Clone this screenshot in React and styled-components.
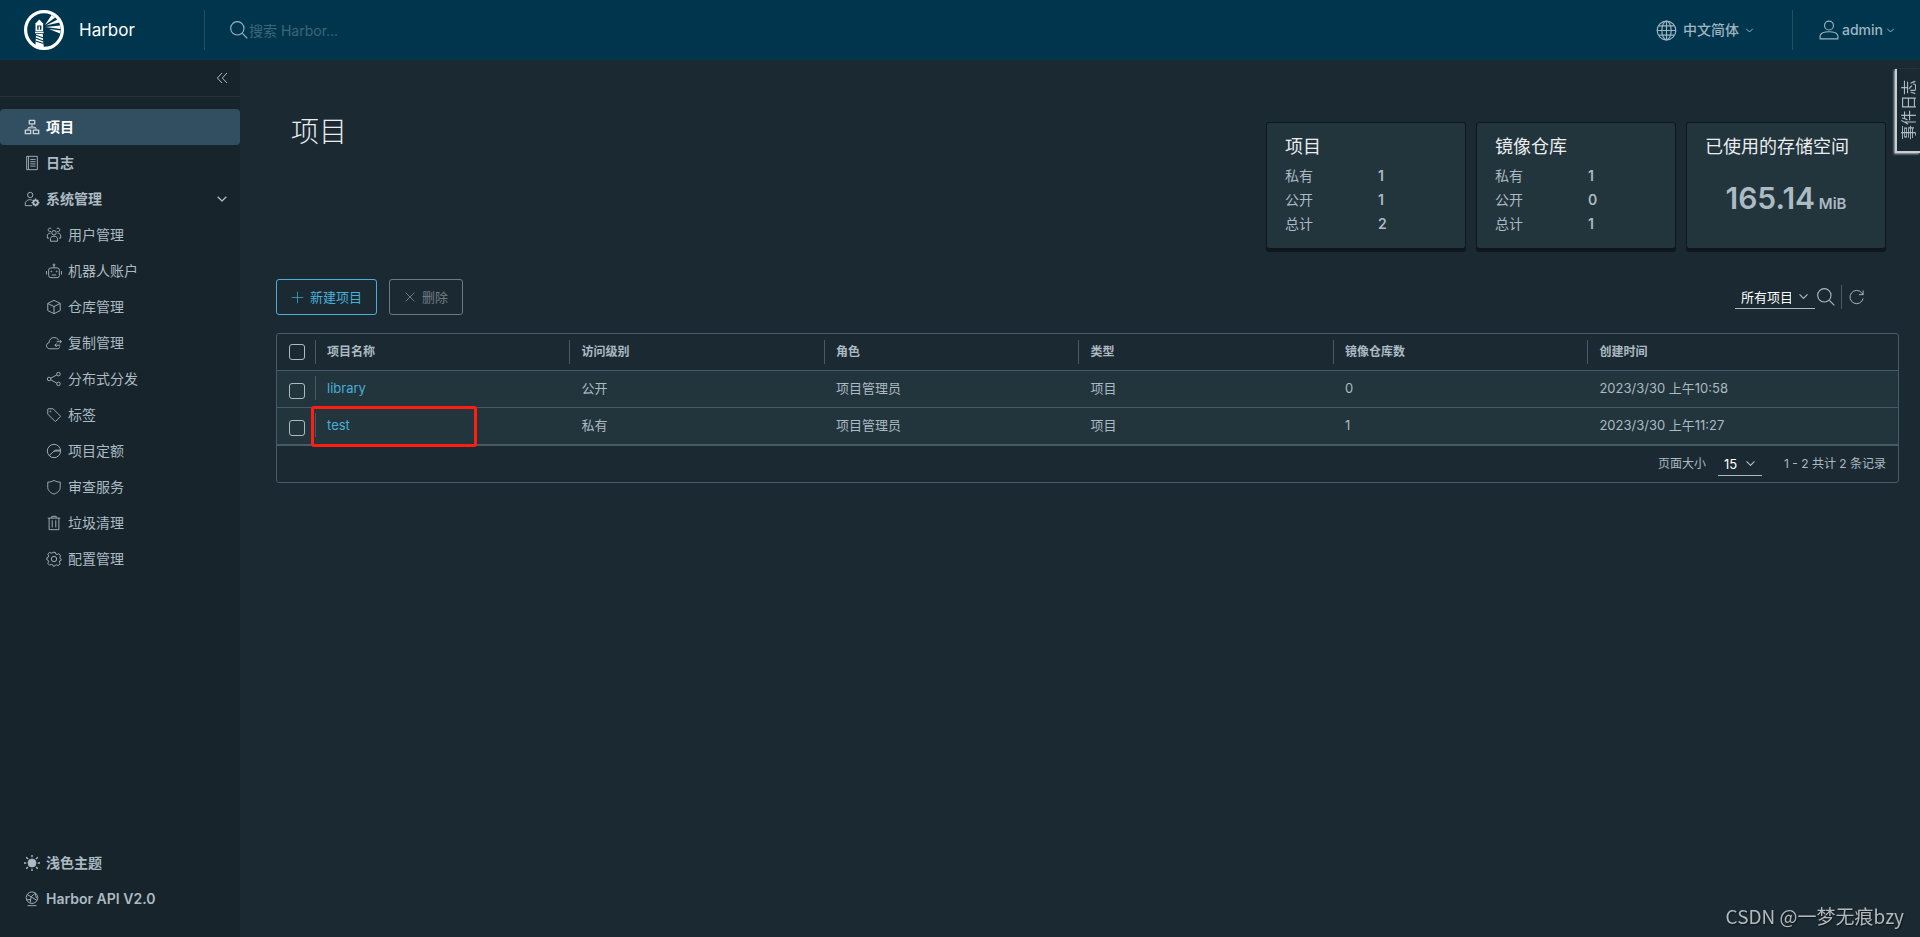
import React from "react";
import styled, { createGlobalStyle, css, ThemeProvider } from "styled-components";

const theme = {
	page: "#1b2a32",
	sidebar: "#17242b",
	header: "#00364d",
	row: "#22343c",
	line: "#495a67",
	text: "#acbac3",
	bright: "#eaedf0",
	link: "#49afd9",
	active: "#324f62",
	dark: "#0f171c"
};

const GlobalStyle = createGlobalStyle`
	* {
		box-sizing: border-box;
	}
	body {
		margin: 0;
		background: #1b2a32;
		color: #acbac3;
		font-family: Inter, "Noto Sans CJK SC", sans-serif;
		font-size: 13px;
		line-height: 24px;
	}
	button, input, select {
		font: inherit;
		color: inherit;
		margin: 0;
	}
	button {
		background: none;
		border: 0;
		padding: 0;
		cursor: pointer;
	}
	a {
		color: inherit;
		text-decoration: none;
	}
`;

/* ---------- icons ---------- */

const Svg = styled.svg`
	width: ${props => props.$size || 16}px;
	height: ${props => props.$size || 16}px;
	flex: none;
	fill: none;
	stroke: currentColor;
	stroke-width: ${props => props.$stroke || 2};
	stroke-linejoin: round;
	pointer-events: none;
`;

const shapes = {
	organization: (
		<>
			<path d="M12 3h12v8H12zM3 25h12v8H3zM21 25h12v8H21z" strokeWidth="3" />
			<path d="M18 11v6M9 25v-5h18v5M9 20l9-3 9 3" />
		</>
	),
	list: (
		<>
			<path d="M6 3h24v30H6z" />
			<path d="M10 3v30M14 10h12M14 15h12M14 20h12M14 25h12" />
		</>
	),
	admin: (
		<>
			<circle cx="14" cy="9" r="6" />
			<path d="M18 33H3v-7c3-6 10-8 16-5" />
			<circle cx="26" cy="26" r="5" strokeWidth="4" />
			<path d="M26 17v4M26 31v4M17 26h4M31 26h4M20 20l3 3M29 29l3 3M32 20l-3 3M20 32l3-3" strokeWidth="3" />
		</>
	),
	users: (
		<>
			<circle cx="18" cy="13" r="5" />
			<path d="M10 32v-6c1-4 4-5 8-5s7 1 8 5v6z" />
			<path d="M11 10a4 4 0 1 1 1-6M25 10a4 4 0 1 0-1-6M10 14c-4 0-6 2-7 4v7h4M26 14c4 0 6 2 7 4v7h-4" />
		</>
	),
	robot: (
		<>
			<rect x="6" y="11" width="24" height="22" rx="5" />
			<circle cx="18" cy="4" r="2" />
			<path d="M18 6v5M13 27h10M1 18v8M35 18v8" />
			<circle cx="12" cy="19" r="1" />
			<circle cx="24" cy="19" r="1" />
		</>
	),
	box: <path d="M18 3l14 7v16l-14 7-14-7V10zM4 10l14 7 14-7M18 17v16" />,
	cloud: (
		<>
			<path d="M31 26c-1 4-3 5-6 5H8c-9-1-9-12-1-14 0-13 18-15 21-5" />
			<path d="M20 23h12M24 19l-4 4 4 4M24 15h10M31 11l4 4-4 4" />
		</>
	),
	share: (
		<>
			<circle cx="7" cy="18" r="4" />
			<circle cx="28" cy="7" r="4" />
			<circle cx="28" cy="29" r="4" />
			<path d="M11 16l13-7M11 20l13 7" />
		</>
	),
	tag: (
		<>
			<path d="M4 5v11l16 16q1 1 2 0l10-10q1-1 0-2L16 4H5z" />
			<circle cx="10" cy="10" r="1" />
		</>
	),
	quota: (
		<>
			<circle cx="18" cy="18" r="15" />
			<path d="M7 29l11-11h14M18 18l4-2h10" />
		</>
	),
	shield: <path d="M18 3c4 3 9 4 14 4v12c0 7-6 12-14 15C10 31 4 26 4 19V7c5 0 10-1 14-4z" />,
	trash: <path d="M4 7h28M13 7V3h10v4M7 7v26h22V7M14 12v16M22 12v16" />,
	cog: (
		<>
			<circle cx="18" cy="18" r="6" />
			<path d="M15 3h6l1 4 3 1 4-2 4 5-2 3 1 3 2 1v3l-3 1-1 3 2 4-5 4-3-2-3 1-1 2h-4l-1-3-3-1-4 2-4-4 2-4-1-3-3-1v-5l3-1 1-3-2-4 4-4 4 2 3-1z" />
		</>
	),
	sun: (
		<>
			<circle cx="18" cy="18" r="9" fill="currentColor" />
			<path d="M18 0v5M18 31v5M0 18h5M31 18h5M5 5l4 4M27 27l4 4M31 5l-4 4M9 27l-4 4" strokeWidth="3" />
		</>
	),
	api: (
		<>
			<circle cx="18" cy="15" r="13" />
			<path d="M7 8l9 5 9-8M16 13l-2 13M16 13l13 8M25 5l3 11M6 20l9-1M8 33h20" />
		</>
	),
	search: (
		<>
			<circle cx="15" cy="15" r="12" />
			<path d="M24 24l9 9" />
		</>
	),
	globe: (
		<>
			<circle cx="18" cy="18" r="16" />
			<ellipse cx="18" cy="18" rx="8" ry="16" />
			<path d="M18 2v32M2 18h32M5 10h26M5 26h26" />
		</>
	),
	user: (
		<>
			<circle cx="18" cy="10" r="8" />
			<path d="M2 34v-6c3-9 29-9 32 0v6z" />
		</>
	),
	chevron: <path d="M5 11l13 13 13-13" />,
	collapse: <path d="M18 3L4 18l14 15M33 3L19 18l14 15" />,
	plus: <path d="M18 2v32M2 18h32" />,
	times: <path d="M5 5l26 26M31 5L5 31" />,
	refresh: <path d="M32 20a14 14 0 1 1-3-12l3 4M32 3v9h-9" />
};

const Icon = ({ name, size, stroke }) => (
	<Svg viewBox="0 0 36 36" $size={size} $stroke={stroke} aria-hidden="true">
		{shapes[name]}
	</Svg>
);

const LogoSvg = styled.svg`
	width: 40px;
	height: 40px;
	fill: #fff;
`;

const Logo = () => (
	<LogoSvg viewBox="0 0 40 40" aria-hidden="true">
		<circle cx="20" cy="20" r="18.4" fill="none" stroke="#fff" strokeWidth="3.2" />
		<path d="M15.3 9.5l4.2 4.5h-8.4z" />
		<path fillRule="evenodd" d="M11.5 13.5h7.6v7.8h-7.6zM13.2 15.4v4.4h4.2v-4.4z" />
		<path d="M14.6 16.6h1.4v3.2h-1.4zM11 21.8h8.6v1.5H11z" />
		<path d="M12 24h6.8l.4 8 .8 7-8.6-1.4z" />
		<path d="M11.5 25l8 3M11.5 28l8 3M11.5 31l8 2.6" stroke="#00364d" strokeWidth="1.1" />
		<path d="M21 15l6.6-10 3.6 2.4zM22 15.6l12-6.4 1.4 3.2zM21.5 17l15-1.6v3.6zM25 19l11.6 1.6-.5 3z" />
	</LogoSvg>
);

/* ---------- header ---------- */

const Header = styled.header`
	display: flex;
	align-items: center;
	height: 60px;
	background: ${props => props.theme.header};
`;

const Brand = styled.a`
	display: flex;
	align-items: center;
	gap: 15px;
	width: 204px;
	padding-left: 24px;
	font-size: 17px;
	color: #fff;
`;

const Divider = styled.span`
	width: 1px;
	height: ${props => props.$height}px;
	background: ${props => props.$color};
`;

const SearchBox = styled.label`
	display: flex;
	align-items: center;
	flex: 1;
	padding-left: 24px;
	color: #9fb5c0;
	input {
		flex: 1;
		background: none;
		border: 0;
		outline: 0;
		padding: 2px 0 0;
		font-size: 14px;
	}
	input::placeholder {
		color: #3f6577;
	}
`;

const HeaderButton = styled.button`
	display: flex;
	align-items: center;
	gap: ${props => props.$gap}px;
	padding: ${props => props.$pad};
	font-size: 14px;
	font-weight: 500;
	color: #9fb5c0;
`;

/* ---------- sidebar ---------- */

const Layout = styled.div`
	display: flex;
	min-height: calc(100vh - 60px);
`;

const Sidebar = styled.nav`
	display: flex;
	flex-direction: column;
	width: 240px;
	flex: none;
	padding-bottom: 20px;
	background: ${props => props.theme.sidebar};
`;

const Collapse = styled.button`
	display: flex;
	align-items: center;
	justify-content: flex-end;
	height: 37px;
	padding-right: 12px;
	margin-bottom: 12px;
	border-bottom: 1px solid #25343c;
`;

const NavItem = styled.a`
	display: flex;
	align-items: center;
	gap: 6px;
	height: 36px;
	padding: 0 12px 0 24px;
	font-size: 14px;
	font-weight: 600;
	${props =>
		props.$sub &&
		css`
			padding-left: 46px;
			font-weight: 400;
		`}
	${props =>
		props.$active &&
		css`
			background: ${props.theme.active};
			border-radius: 4px;
			color: #fff;
			svg {
				color: #c8d3da;
			}
		`}
	span {
		flex: 1;
		text-align: left;
	}
`;

const NavBottom = styled.div`
	margin-top: auto;
`;

/* ---------- content ---------- */

const Main = styled.main`
	flex: 1;
	min-width: 0;
	padding: 53px 21px 24px 36px;
`;

const TitleBar = styled.div`
	display: flex;
	justify-content: space-between;
	padding: 0 13px 0 15px;
	margin-bottom: 30px;
`;

const Title = styled.h1`
	margin: 0;
	font-size: 28px;
	font-weight: 300;
	line-height: 38px;
	color: ${props => props.theme.bright};
`;

const Cards = styled.div`
	display: flex;
	gap: 10px;
	padding-top: 9px;
`;

const Card = styled.section`
	width: 200px;
	padding: 12px 18px;
	background: ${props => props.theme.row};
	border: 1px solid ${props => props.theme.dark};
	border-radius: 3px;
	box-shadow: 0 3px 0 ${props => props.theme.dark};
	font-size: 14px;
	h2 {
		margin: 0 0 5px;
		font-size: 18px;
		font-weight: 400;
		line-height: 24px;
		color: ${props => props.theme.bright};
	}
	dl {
		display: grid;
		grid-template-columns: 93px 1fr;
		margin: 0;
	}
	dd {
		margin: 0;
		font-weight: 600;
	}
`;

const Storage = styled.p`
	margin: 0;
	padding-top: 16px;
	text-align: center;
	font-size: 15px;
	font-weight: 600;
	line-height: 36px;
	strong {
		font-size: 30px;
		font-weight: 600;
	}
`;

const Toolbar = styled.div`
	display: flex;
	align-items: center;
	gap: 12px;
	margin-bottom: 18px;
`;

const ActionButton = styled.button`
	display: flex;
	align-items: center;
	gap: 6px;
	height: 36px;
	padding: 0 14px;
	border: 1px solid ${props => props.theme.link};
	border-radius: 3px;
	color: ${props => props.theme.link};
	font-weight: 400;
	&:disabled {
		border-color: #6f7b82;
		color: #6f7b82;
		cursor: default;
	}
`;

const Filters = styled.div`
	display: flex;
	align-items: center;
	margin-left: auto;
	padding-right: 34px;
`;

const IconButton = styled.button`
	display: flex;
	padding: ${props => props.$pad || "0"};
`;

// native select with its own caret on top of the right edge
const SelectBox = styled.span`
	display: flex;
	align-items: center;
	width: ${props => props.$width}px;
	border-bottom: 1px solid ${props => props.theme.text};
	color: ${props => props.theme.text};
	select {
		flex: 1;
		width: 100%;
		height: 23px;
		padding: 0 24px 2px 6px;
		margin-right: -17px;
		appearance: none;
		background: none;
		border: 0;
		outline: 0;
		color: #fff;
	}
	svg {
		margin-right: 6px;
	}
`;

const Select = ({ width, label, value }) => (
	<SelectBox $width={width}>
		<select aria-label={label} defaultValue={value}>
			<option>{value}</option>
		</select>
		<Icon name="chevron" size={11} stroke={4} />
	</SelectBox>
);

const Datagrid = styled.div`
	border: 1px solid ${props => props.theme.line};
	border-radius: 3px;
`;

const Table = styled.table`
	width: 100%;
	table-layout: fixed;
	border-collapse: separate;
	border-spacing: 0;
	th,
	td {
		height: 37px;
		padding: 0;
		border-bottom: 1px solid ${props => props.theme.line};
		text-align: left;
	}
	th {
		width: 15.7%;
		font-size: 12px;
		font-weight: 600;
	}
	th:first-child {
		width: 38px;
	}
	th:last-child {
		width: auto;
	}
	tbody {
		background: ${props => props.theme.row};
	}
	td {
		position: relative;
		padding-bottom: 2px;
	}
	a {
		color: ${props => props.theme.link};
	}
`;

const Cell = styled.div`
	padding-left: 11px;
	border-left: 1px solid ${props => (props.$line ? props.theme.line : "transparent")};
`;

const Checkbox = styled.input.attrs({ type: "checkbox" })`
	display: block;
	appearance: none;
	width: 16px;
	height: 16px;
	margin-left: 12px;
	border: 1px solid ${props => props.theme.text};
	border-radius: 3px;
	td & {
		margin-top: 5px;
	}
`;

const Highlight = styled.span`
	position: absolute;
	top: -2px;
	left: -4px;
	width: 166px;
	height: 41px;
	border: 3px solid #ff1e10;
	border-radius: 3px;
	pointer-events: none;
`;

const Footer = styled.div`
	display: flex;
	align-items: center;
	justify-content: flex-end;
	height: 37px;
	padding-right: 12px;
	border-top: 1px solid ${props => props.theme.line};
	font-size: 12px;
	label {
		display: flex;
		align-items: center;
		gap: 12px;
		margin-right: 22px;
	}
	select {
		font-size: 13px;
		padding-bottom: 0;
	}
`;

/* ---------- overlays ---------- */

const EventTab = styled.button`
	position: fixed;
	top: 69px;
	right: 0;
	width: 25px;
	height: 84px;
	background: ${props => props.theme.page};
	border: solid #c8cdd1;
	border-width: 0 0 2px 2px;
	box-shadow: -1px 1px 2px #acbac3;
	font-size: 15px;
	span {
		display: block;
		writing-mode: vertical-rl;
		text-orientation: sideways;
		transform: rotate(180deg);
		line-height: 24px;
		text-align: center;
	}
`;

const Watermark = styled.div`
	position: fixed;
	right: 16px;
	bottom: 9px;
	font-family: "Noto Sans CJK SC", sans-serif;
	font-size: 19px;
	color: #b4b9bc;
	text-shadow: 1px 1px 1px #0f171c;
`;

const adminItems = [
	["users", "用户管理"],
	["robot", "机器人账户"],
	["box", "仓库管理"],
	["cloud", "复制管理"],
	["share", "分布式分发"],
	["tag", "标签"],
	["quota", "项目定额"],
	["shield", "审查服务"],
	["trash", "垃圾清理"],
	["cog", "配置管理"]
];

const summary = [
	{ title: "项目", counts: [["私有", 1], ["公开", 1], ["总计", 2]] },
	{ title: "镜像仓库", counts: [["私有", 1], ["公开", 0], ["总计", 1]] }
];

const columns = ["项目名称", "访问级别", "角色", "类型", "镜像仓库数", "创建时间"];

const projects = [
	{
		name: "library",
		cells: ["公开", "项目管理员", "项目", "0", "2023/3/30 上午10:58"]
	},
	{
		name: "test",
		cells: ["私有", "项目管理员", "项目", "1", "2023/3/30 上午11:27"],
		marked: true
	}
];

const App = () => (
	<ThemeProvider theme={theme}>
		<GlobalStyle />
		<Header>
			<Brand href="#">
				<Logo />
				Harbor
			</Brand>
			<Divider $height={40} $color="#1f5064" />
			<SearchBox>
				<Icon name="search" size={20} stroke={2} />
				<input type="text" aria-label="搜索" placeholder="搜索 Harbor..." />
			</SearchBox>
			<HeaderButton $gap={6} $pad="0 38px 0 0">
				<Icon name="globe" size={21} />
				中文简体
				<Icon name="chevron" size={9} stroke={4} />
			</HeaderButton>
			<Divider $height={40} $color="#1f5064" />
			<HeaderButton $gap={3} $pad="0 25px 0 26px">
				<Icon name="user" size={20} />
				admin
				<Icon name="chevron" size={9} stroke={4} />
			</HeaderButton>
		</Header>

		<Layout>
			<Sidebar>
				<Collapse aria-label="收起">
					<Icon name="collapse" size={12} stroke={3} />
				</Collapse>
				<NavItem href="#" $active>
					<Icon name="organization" />
					<span>项目</span>
				</NavItem>
				<NavItem href="#">
					<Icon name="list" />
					<span>日志</span>
				</NavItem>
				<NavItem as="button">
					<Icon name="admin" />
					<span>系统管理</span>
					<Icon name="chevron" size={12} stroke={4} />
				</NavItem>
				{adminItems.map(([icon, label]) => (
					<NavItem key={icon} href="#" $sub>
						<Icon name={icon} />
						<span>{label}</span>
					</NavItem>
				))}
				<NavBottom>
					<NavItem href="#">
						<Icon name="sun" />
						<span>浅色主题</span>
					</NavItem>
					<NavItem href="#">
						<Icon name="api" />
						<span>Harbor API V2.0</span>
					</NavItem>
				</NavBottom>
			</Sidebar>

			<Main>
				<TitleBar>
					<Title>项目</Title>
					<Cards>
						{summary.map(({ title, counts }) => (
							<Card key={title}>
								<h2>{title}</h2>
								<dl>
									{counts.map(([label, count]) => (
										<React.Fragment key={label}>
											<dt>{label}</dt>
											<dd>{count}</dd>
										</React.Fragment>
									))}
								</dl>
							</Card>
						))}
						<Card>
							<h2>已使用的存储空间</h2>
							<Storage>
								<strong>165.14</strong> MiB
							</Storage>
						</Card>
					</Cards>
				</TitleBar>

				<Toolbar>
					<ActionButton>
						<Icon name="plus" size={13} />
						新建项目
					</ActionButton>
					<ActionButton disabled>
						<Icon name="times" size={12} stroke={3} />
						删除
					</ActionButton>
					<Filters>
						<Select width={80} label="项目类型" value="所有项目" />
						<IconButton $pad="0 5px 0 1px" aria-label="搜索项目">
							<Icon name="search" size={20} />
						</IconButton>
						<Divider $height={24} $color={theme.line} />
						<IconButton $pad="0 0 0 6px" aria-label="刷新">
							<Icon name="refresh" size={17} />
						</IconButton>
					</Filters>
				</Toolbar>

				<Datagrid>
					<Table>
						<thead>
							<tr>
								<th>
									<Checkbox aria-label="全选" />
								</th>
								{columns.map(column => (
									<th key={column}>
										<Cell $line>{column}</Cell>
									</th>
								))}
							</tr>
						</thead>
						<tbody>
							{projects.map(({ name, cells, marked }) => (
								<tr key={name}>
									<td>
										<Checkbox aria-label={name} />
									</td>
									<td>
										<Cell $line>
											<a href="#">{name}</a>
										</Cell>
										{marked && <Highlight />}
									</td>
									{cells.map((cell, i) => (
										<td key={i}>
											<Cell>{cell}</Cell>
										</td>
									))}
								</tr>
							))}
						</tbody>
					</Table>
					<Footer>
						<label>
							页面大小
							<Select width={44} label="页面大小" value="15" />
						</label>
						1 - 2 共计 2 条记录
					</Footer>
				</Datagrid>
			</Main>
		</Layout>

		<EventTab>
			<span>事件日志</span>
		</EventTab>
		<Watermark>CSDN @一梦无痕bzy</Watermark>
	</ThemeProvider>
);

export default App;
